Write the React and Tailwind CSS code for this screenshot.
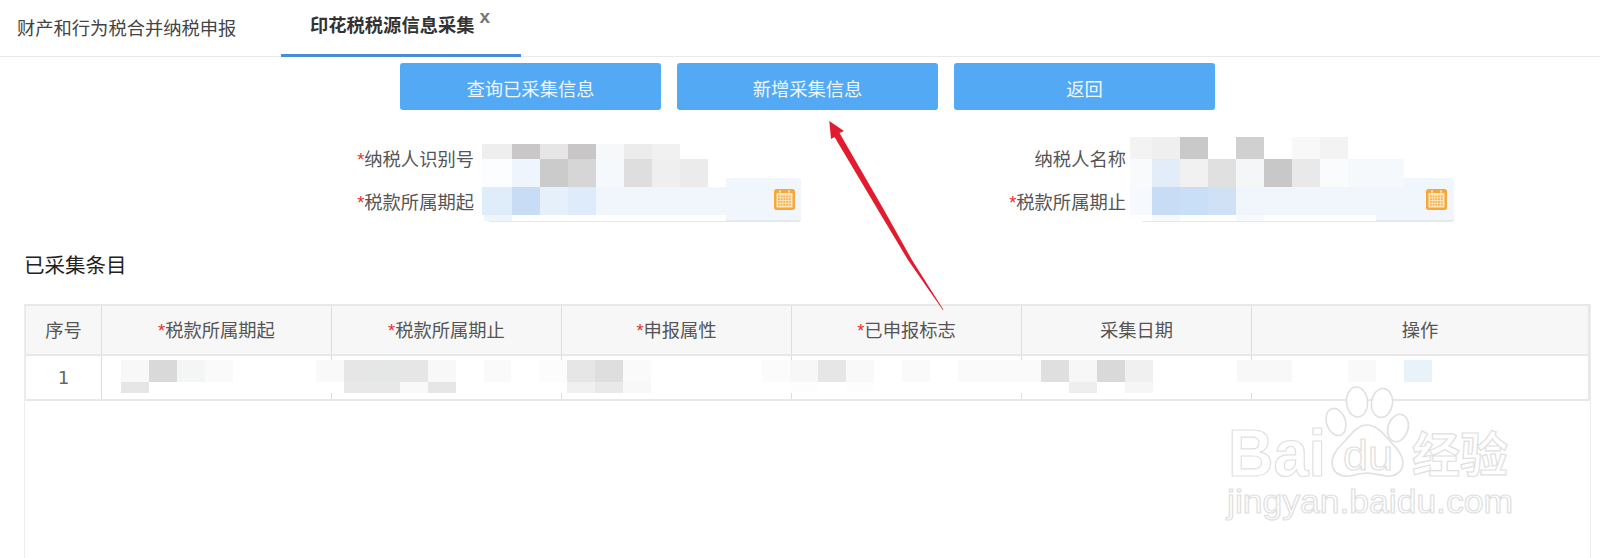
import React from "react";

const Star = () => <span className="text-[#e5302f]">*</span>;

function Calendar() {
  return (
    <svg width="21" height="21" viewBox="0 0 21 21" className="shrink-0">
      <rect x="0" y="0" width="21" height="21" rx="2.5" fill="#f4a83a" />
      <rect x="2.5" y="4" width="16" height="14.5" rx="0.5" fill="#fde6bf" />
      {[0, 1, 2, 3].map((r) =>
        [0, 1, 2, 3, 4].map((c) => (
          <rect key={r + "-" + c} x={4 + c * 2.7} y={6.5 + r * 2.8} width="1.8" height="1.8" fill="#f4ae4c" />
        ))
      )}
      <rect x="5" y="1.5" width="2" height="2" fill="#fde6bf" />
      <rect x="14" y="1.5" width="2" height="2" fill="#fde6bf" />
    </svg>
  );
}

function Mosaic({ className, innerClassName = "", rows }) {
  return (
    <div className={"absolute overflow-hidden " + className}>
      <div className={"flex flex-col " + innerClassName}>
        {rows.map((row, i) => (
          <div key={i} className={"flex " + row.h}>
            {row.cells.map((c, j) => (
              <div key={j} className={"w-[28px] shrink-0 " + c} />
            ))}
          </div>
        ))}
      </div>
    </div>
  );
}

function Strip({ cells, className }) {
  return (
    <div className={"flex " + className}>
      {Array.from({ length: 48 }).map((_, i) => (
        <div key={i} className={"w-[27.9px] shrink-0 " + (cells[i] || "")} />
      ))}
    </div>
  );
}

const leftRows = [
  { h: "h-[15px]", cells: ["bg-[#eeeeee] w-[2px]!", "bg-[#eeeeee]", "bg-[#c9c7c8]", "bg-[#e6e6e6]", "bg-[#c8c6c7]", "bg-[#f7f8f9]", "bg-[#ececec]", "bg-[#f1f1f1]"] },
  { h: "h-[28px]", cells: ["bg-[#fcfdfe] w-[2px]!", "bg-[#fcfdfe]", "bg-[#eff5fd]", "bg-[#cbcbcb]", "bg-[#d6d6d7]", "bg-[#f6f9fc]", "bg-[#dedede]", "bg-[#efefef]", "bg-[#ebebeb]", "bg-white w-[18px]!"] },
  { h: "h-[28px]", cells: ["bg-[#dfecfa] w-[2px]!", "bg-[#dfecfa]", "bg-[#c8ddf5]", "bg-[#e6f0fb]", "bg-[#deebfb]"] },
  { h: "h-[6px]", cells: ["bg-white w-[2px]!", "bg-[#eef4fc]", "bg-white", "bg-white", "bg-white", "bg-white", "bg-white", "bg-white", "bg-white", "bg-white w-[18px]!"] },
];

const rightRows = [
  { h: "h-[22px]", cells: ["bg-[#f3f3f3]", "bg-[#efefef]", "bg-[#c9c9c9]", "bg-white", "bg-[#d0d0d0]", "bg-white", "bg-[#f8f8f8]", "bg-[#f3f3f3]"] },
  { h: "h-[28px]", cells: ["bg-[#f8fafc]", "bg-[#e3edf9]", "bg-[#f1f1f1]", "bg-[#e0e0e0]", "bg-[#f5f6f8]", "bg-[#c9c8c8]", "bg-[#e9e9e9]", "bg-[#fafbfc]", "bg-[#f6f9fc]", "bg-[#f6f9fc]"] },
  { h: "h-[28px]", cells: ["bg-[#f6f9fd]", "bg-[#c8dcf5]", "bg-[#c9def7]", "bg-[#d0e1f6]"] },
  { h: "h-[6px]", cells: ["bg-white", "bg-[#f6f9fd]", "bg-white", "bg-white", "bg-[#f6f9fd]", "bg-white", "bg-white", "bg-white", "bg-white"] },
];

const rowA = {
  0: "bg-[#f8f8f8]", 1: "bg-[#d9d9d9]", 2: "bg-[#f4f5f5]", 3: "bg-[#fafafa]", 7: "bg-[#f9f9f9]",
  8: "bg-[#e6e6e6]", 9: "bg-[#e5e6e6]", 10: "bg-[#e6e6e6]", 11: "bg-[#f8f8f8]", 13: "bg-[#fafafa]",
  15: "bg-[#fcfcfc]", 16: "bg-[#e6e6e6]", 17: "bg-[#dedede]", 18: "bg-[#fafafa]", 23: "bg-[#fbfbfb]",
  24: "bg-[#f7f7f7]", 25: "bg-[#e6e6e6]", 26: "bg-[#f9f9f9]", 28: "bg-[#fafafa]", 30: "bg-[#fafafa]",
  31: "bg-[#fafafa]", 32: "bg-[#fafafa]", 33: "bg-[#dfdfdf]", 34: "bg-[#f7f7f7]", 35: "bg-[#d9d9d9]",
  36: "bg-[#f0f0f0]", 40: "bg-[#f8f8f8]", 41: "bg-[#f8f8f8]", 44: "bg-[#f9f9f9]", 46: "bg-[#e8f2f9]",
};

const rowB = {
  0: "bg-[#e6e6e6]", 8: "bg-[#e8e8e8]", 9: "bg-[#e8e8e8]", 10: "bg-[#f9f9f9]", 11: "bg-[#e6e6e6]",
  16: "bg-[#f0f0f0]", 17: "bg-[#eae9e9]", 18: "bg-[#f8f8f8]", 24: "bg-[#fdfdfd]", 26: "bg-[#fdfdfd]",
  34: "bg-[#eeeeee]", 36: "bg-[#f6f6f6]",
};

const headers = [
  { t: "序号" },
  { t: "税款所属期起", s: true },
  { t: "税款所属期止", s: true },
  { t: "申报属性", s: true },
  { t: "已申报标志", s: true },
  { t: "采集日期" },
  { t: "操作" },
];

function Watermark() {
  const stroke = "#e0e0e0";
  return (
    <svg width="320" height="170" viewBox="1210 370 320 170" className="absolute left-[1210px] top-[370px]">
      <g fill="#ffffff" stroke={stroke} strokeWidth="1.6">
        <ellipse cx="1336" cy="422" rx="9.5" ry="14" transform="rotate(-18 1336 422)" />
        <ellipse cx="1357" cy="402" rx="10.5" ry="15" transform="rotate(-5 1357 402)" />
        <ellipse cx="1382" cy="403" rx="10.5" ry="14.5" transform="rotate(8 1382 403)" />
        <ellipse cx="1398" cy="428" rx="10" ry="14" transform="rotate(18 1398 428)" />
        <path d="M1367 425c-9 0-15 8-21 15-6 6-14 13-14 23 0 9 8 14 17 13 7-1 12-3 18-3s12 2 19 3c9 1 17-4 17-13 0-9-8-16-14-23-6-7-13-15-22-15z" />
      </g>
      <g fontFamily="'Liberation Sans', sans-serif" fill="#ffffff" stroke={stroke} strokeWidth="1.2">
        <text x="1228" y="476" fontSize="66" fontWeight="700" textLength="98" lengthAdjust="spacingAndGlyphs">Bai</text>
        <text x="1343" y="470" fontSize="42" textLength="50" lengthAdjust="spacingAndGlyphs">du</text>
        <text x="1227" y="513" fontSize="34" textLength="286" lengthAdjust="spacingAndGlyphs">jingyan.baidu.com</text>
      </g>
      <text x="1412" y="472" fontFamily="'Noto Sans CJK SC', sans-serif" fontWeight="700" fontSize="48" fill="#ffffff" stroke={stroke} strokeWidth="1.2">经验</text>
    </svg>
  );
}

export default function App() {
  return (
    <div className="relative h-[558px] w-[1600px] overflow-hidden bg-white font-['Liberation_Sans','Noto_Sans_CJK_SC',sans-serif] text-[18.3px] text-[#555]">
      <nav className="flex h-[57px] items-start border-b border-[#e8eaec]">
        <div className="flex h-[57px] w-[281px] items-center pl-[17px] text-[#444]">财产和行为税合并纳税申报</div>
        <div className="flex h-[57px] w-[240px] items-center border-b-[3px] border-[#4a8cdb] pl-[29px] pb-[2px] font-bold text-[#333]">
          印花税税源信息采集
          <span className="mb-[20px] ml-[5px] text-[19px] leading-none text-[#777]">x</span>
        </div>
      </nav>

      <div className="mt-[6px] ml-[400px] flex gap-[16px]">
        {["查询已采集信息", "新增采集信息", "返回"].map((t) => (
          <button key={t} className="h-[47px] w-[261px] rounded-[3px] bg-[#53a9f3] pt-[6px] text-[18.3px] text-[#eef6fe]">
            {t}
          </button>
        ))}
      </div>

      <div className="mt-[25px] grid grid-cols-[474px_327px_325px_328px] grid-rows-[43px_44px]">
        <div className="flex items-center justify-end pt-[6px]"><span><Star />纳税人识别号</span></div>
        <div />
        <div className="flex items-center justify-end pt-[6px]">纳税人名称</div>
        <div />
        <div className="flex items-center justify-end pt-[6px]"><span><Star />税款所属期起</span></div>
        <div className="ml-[14px] flex items-center justify-end rounded-[3px] border-b-2 border-[#e4e8ec] bg-[#f0f6fc] pr-[6px]">
          <Calendar />
        </div>
        <div className="flex items-center justify-end pt-[6px]"><span><Star />税款所属期止</span></div>
        <div className="ml-[15px] flex items-center justify-end rounded-[3px] border-b-2 border-[#e4e8ec] bg-[#f0f6fc] pr-[7px]">
          <Calendar />
        </div>
      </div>

      <h2 className="mt-[30px] ml-[24px] text-[20.5px] leading-[28px] text-[#222]">已采集条目</h2>

      <div className="mt-[24px] ml-[24px] h-[254px] w-[1567px] border-x border-[#ededed]">
        <div className="w-[1565px] border-2 border-l border-[#e8e8e8]">
          <div className="grid grid-cols-[76px_230px_230px_230px_230px_230px_1fr] border-b-2 border-[#e8e8e8] bg-[#f7f7f7]">
            {headers.map((h, i) => (
              <div key={h.t} className={"flex h-[48px] items-center justify-center pt-[2px] " + (i < 6 ? "border-r border-[#dddddd]" : "")}>
                <span>{h.s && <Star />}{h.t}</span>
              </div>
            ))}
          </div>
          <div className="grid h-[43px] grid-cols-[76px_230px_230px_230px_230px_230px_1fr]">
            {headers.map((h, i) => (
              <div key={h.t} className={"flex items-center justify-center " + (i < 6 ? "border-r border-[#dddddd]" : "")}>
                {i === 0 && <span className="font-['DejaVu_Sans',sans-serif] text-[#666]">1</span>}
              </div>
            ))}
          </div>
        </div>
      </div>

      <Mosaic className="left-[482px] top-[144px]" rows={leftRows} />
      <Mosaic className="left-[1130px] top-[137px]" innerClassName="-ml-[6px]" rows={rightRows} />

      <div className="absolute left-[105px] top-[360px] h-[33px] w-[1478px] overflow-hidden bg-white">
        <Strip cells={rowA} className="ml-[16px] h-[22px]" />
        <Strip cells={rowB} className="ml-[16px] h-[11px]" />
      </div>

      <Watermark />

      <svg width="130" height="200" viewBox="820 115 130 200" className="absolute left-[820px] top-[115px]">
        <polygon points="829.3,121 844,131 839.5,133 884,210 912,260 943.6,310 942.8,310 908,260 878,210 834.5,137 831,139" fill="#e31b2e" />
      </svg>
    </div>
  );
}
